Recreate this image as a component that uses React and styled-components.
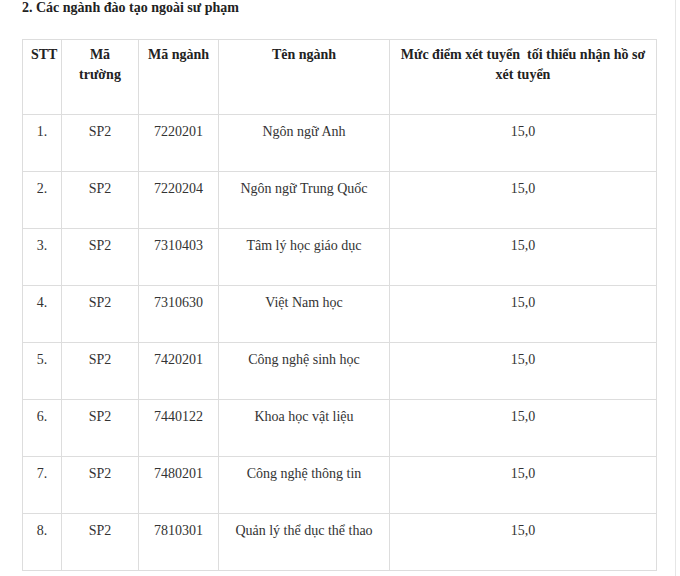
import React from "react";
import styled, { createGlobalStyle } from "styled-components";

const GlobalStyle = createGlobalStyle`
  html, body {
    margin: 0;
    padding: 0;
    background: #ffffff;
  }
  body {
    font-family: "Liberation Serif", "Times New Roman", serif;
    color: #333333;
  }
`;

const Page = styled.div`
  width: 676px;
  height: 576px;
  box-sizing: border-box;
  border-right: 1px solid #e6e6e6;
  padding: 0 0 0 22px;
`;

const Title = styled.h3`
  margin: 0 0 23px;
  font-size: 14px;
  line-height: 16px;
  font-weight: bold;
  color: #222222;
`;

const Table = styled.table`
  border-collapse: collapse;
  table-layout: fixed;
  width: 635px;
  font-size: 14px;
  line-height: 20px;
`;

const HeadCell = styled.th`
  border: 1px solid #dddddd;
  padding: 5px 8px 0;
  height: 75px;
  vertical-align: top;
  text-align: center;
  font-weight: bold;
  color: #222222;
  box-sizing: border-box;
`;

const Cell = styled.td`
  border: 1px solid #dddddd;
  padding: 7px 4px 0;
  height: 57px;
  vertical-align: top;
  text-align: center;
  color: #333333;
  box-sizing: border-box;
`;

const widths = [39, 77, 80, 171, 267];

const rows = [
  ["1.", "SP2", "7220201", "Ngôn ngữ Anh", "15,0"],
  ["2.", "SP2", "7220204", "Ngôn ngữ Trung Quốc", "15,0"],
  ["3.", "SP2", "7310403", "Tâm lý học giáo dục", "15,0"],
  ["4.", "SP2", "7310630", "Việt Nam học", "15,0"],
  ["5.", "SP2", "7420201", "Công nghệ sinh học", "15,0"],
  ["6.", "SP2", "7440122", "Khoa học vật liệu", "15,0"],
  ["7.", "SP2", "7480201", "Công nghệ thông tin", "15,0"],
  ["8.", "SP2", "7810301", "Quản lý thể dục thể thao", "15,0"],
];

export default function App() {
  return (
    <>
      <GlobalStyle />
      <Page>
        <Title>2. Các ngành đào tạo ngoài sư phạm</Title>
        <Table>
          <colgroup>
            {widths.map((w, i) => (
              <col key={i} style={{ width: w }} />
            ))}
          </colgroup>
          <thead>
            <tr>
              <HeadCell>STT</HeadCell>
              <HeadCell>Mã trường</HeadCell>
              <HeadCell>Mã ngành</HeadCell>
              <HeadCell>Tên ngành</HeadCell>
              <HeadCell>Mức điểm xét tuyển&nbsp; tối thiểu nhận hồ sơ xét tuyển</HeadCell>
            </tr>
          </thead>
          <tbody>
            {rows.map((r) => (
              <tr key={r[0]}>
                {r.map((c, i) => (
                  <Cell key={i}>{c}</Cell>
                ))}
              </tr>
            ))}
          </tbody>
        </Table>
      </Page>
    </>
  );
}
